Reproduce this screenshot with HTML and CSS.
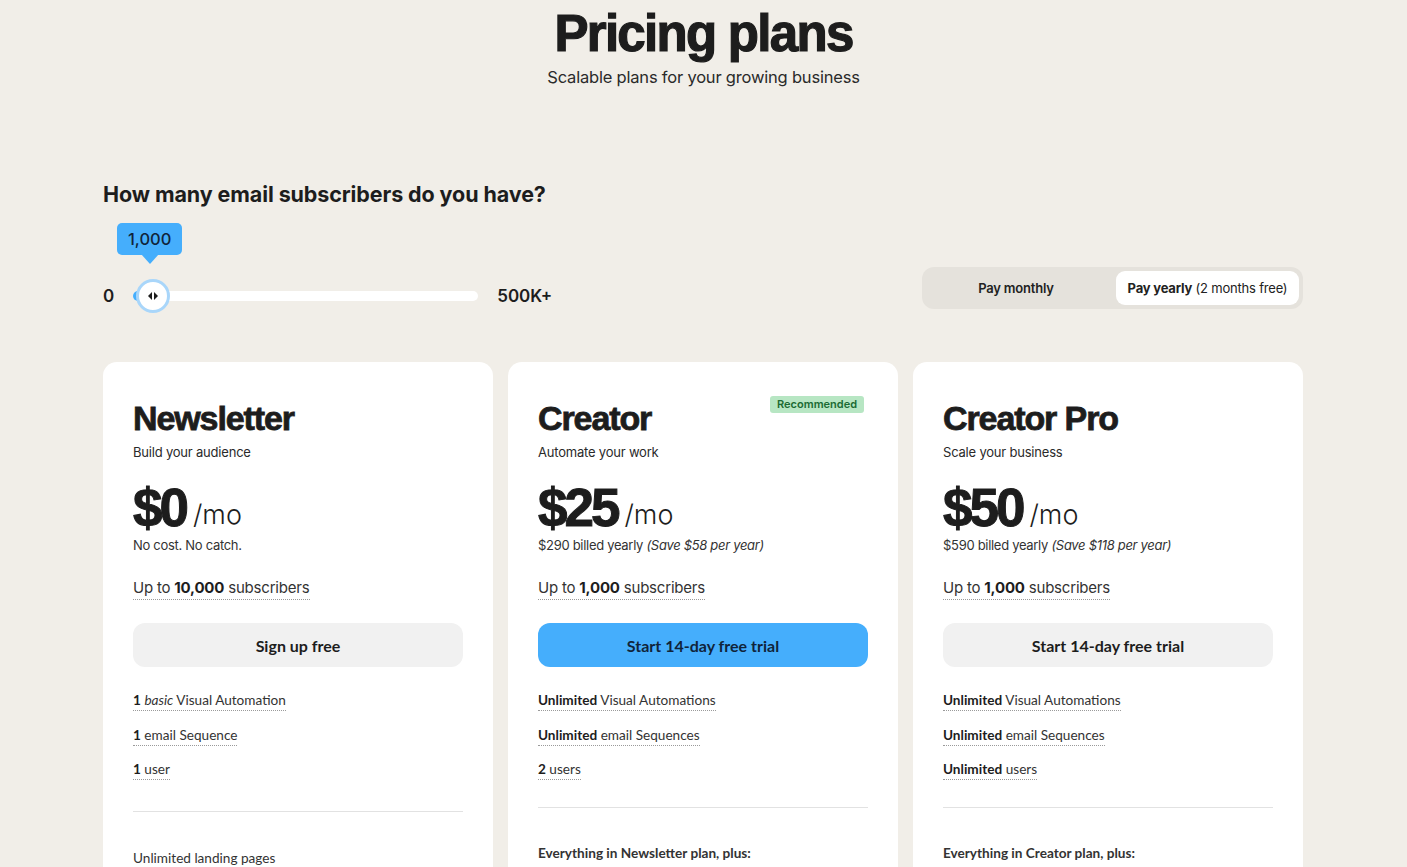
FILE: index.html
```html
<!DOCTYPE html>
<html lang="en">
<head>
  <meta charset="UTF-8">
  <meta name="viewport" content="width=device-width, initial-scale=1.0">
  <title>Pricing plans</title>
  <link rel="stylesheet" href="styles.css">
</head>
<body>

  <header class="hero">
    <h1 class="hero-title">Pricing plans</h1>
    <p class="hero-sub">Scalable plans for your growing business</p>
  </header>

  <section class="controls">
    <div class="subs">
      <h2 class="subs-title">How many email subscribers do you have?</h2>
      <div class="bubble-row">
        <div class="bubble">1,000</div>
      </div>
      <div class="slider-row">
        <span class="slider-label">0</span>
        <div class="track">
          <div class="fill"></div>
          <div class="thumb">
            <svg width="12" height="10" viewBox="0 0 12 10"><path d="M5 1 L1 5 L5 9 Z" fill="#1d1d1d"/><path d="M7 1 L11 5 L7 9 Z" fill="#1d1d1d"/></svg>
          </div>
        </div>
        <span class="slider-label">500K+</span>
      </div>
    </div>

    <div class="toggle">
      <button class="toggle-btn">Pay monthly</button>
      <button class="toggle-btn active"><b>Pay yearly</b> (2 months free)</button>
    </div>
  </section>

  <section class="cards">
    <div class="card">
      <h3 class="card-title">Newsletter</h3>
      <p class="card-sub">Build your audience</p>
      <div class="price"><span class="amount">$0</span><span class="per">/mo</span></div>
      <p class="billed">No cost. No catch.</p>
      <p class="limit"><span class="dotted">Up to <b>10,000</b> subscribers</span></p>
      <button class="cta">Sign up free</button>
      <ul class="features">
        <li><span class="dotted"><b>1</b> <i>basic</i> Visual Automation</span></li>
        <li><span class="dotted"><b>1</b> email Sequence</span></li>
        <li><span class="dotted"><b>1</b> user</span></li>
      </ul>
      <hr class="divider first">
      <ul class="features extra">
        <li><span class="dotted">Unlimited landing pages</span></li>
      </ul>
    </div>

    <div class="card">
      <span class="badge">Recommended</span>
      <h3 class="card-title">Creator</h3>
      <p class="card-sub">Automate your work</p>
      <div class="price"><span class="amount">$25</span><span class="per">/mo</span></div>
      <p class="billed">$290 billed yearly <i>(Save $58 per year)</i></p>
      <p class="limit"><span class="dotted">Up to <b>1,000</b> subscribers</span></p>
      <button class="cta primary">Start 14-day free trial</button>
      <ul class="features">
        <li><span class="dotted"><b>Unlimited</b> Visual Automations</span></li>
        <li><span class="dotted"><b>Unlimited</b> email Sequences</span></li>
        <li><span class="dotted"><b>2</b> users</span></li>
      </ul>
      <hr class="divider">
      <p class="plus">Everything in Newsletter plan, plus:</p>
    </div>

    <div class="card">
      <h3 class="card-title">Creator Pro</h3>
      <p class="card-sub">Scale your business</p>
      <div class="price"><span class="amount">$50</span><span class="per">/mo</span></div>
      <p class="billed">$590 billed yearly <i>(Save $118 per year)</i></p>
      <p class="limit"><span class="dotted">Up to <b>1,000</b> subscribers</span></p>
      <button class="cta">Start 14-day free trial</button>
      <ul class="features">
        <li><span class="dotted"><b>Unlimited</b> Visual Automations</span></li>
        <li><span class="dotted"><b>Unlimited</b> email Sequences</span></li>
        <li><span class="dotted"><b>Unlimited</b> users</span></li>
      </ul>
      <hr class="divider">
      <p class="plus">Everything in Creator plan, plus:</p>
    </div>
  </section>

</body>
</html>
```

FILE: styles.css
```css
body {
  margin: 0;
  background: #f1eee8;
  color: #1d1d1d;
  font-family: 'Inter', 'Liberation Sans', sans-serif;
  overflow: hidden;
}

.hero {
  text-align: center;
  padding-top: 5px;
}

.hero-title {
  margin: 0;
  font-family: 'Liberation Sans', 'Arial', sans-serif;
  font-weight: 700;
  font-size: 51px;
  line-height: 58px;
  letter-spacing: -1.7px;
  -webkit-text-stroke: 1.2px #1d1d1d;
}

.hero-sub {
  margin: 4px 0 0;
  font-size: 16.5px;
  line-height: 20px;
  letter-spacing: -0.2px;
  color: #2a2a2a;
}

.controls {
  width: 1200px;
  margin: 93px 0 0 103px;
  display: flex;
  justify-content: space-between;
  align-items: flex-end;
}

.subs-title {
  margin: 0;
  font-size: 21.5px;
  font-weight: 700;
  letter-spacing: -0.1px;
  line-height: 28px;
}

.bubble-row {
  margin-top: 15px;
  padding-left: 14px;
}

.bubble {
  position: relative;
  display: inline-block;
  background: #45aefc;
  color: #10243a;
  font-size: 16.5px;
  font-weight: 500;
  padding: 5px 11px;
  border-radius: 5px;
  line-height: 22px;
}

.bubble::after {
  content: "";
  position: absolute;
  left: 50%;
  bottom: -9px;
  margin-left: -9px;
  border-left: 9px solid transparent;
  border-right: 9px solid transparent;
  border-top: 10px solid #45aefc;
}

.slider-row {
  display: flex;
  align-items: center;
  margin-top: 24px;
  height: 34px;
}

.slider-label {
  font-size: 17px;
  font-weight: 600;
}

.track {
  position: relative;
  width: 345px;
  height: 10px;
  background: #fff;
  border-radius: 5px;
  margin: 0 19px;
}

.fill {
  position: absolute;
  left: 0;
  top: 0;
  width: 20px;
  height: 10px;
  background: #45aefc;
  border-radius: 5px 0 0 5px;
}

.thumb {
  position: absolute;
  left: 3px;
  top: -12px;
  width: 28px;
  height: 28px;
  border: 3px solid #a9d6fa;
  border-radius: 50%;
  background: #fff;
  display: flex;
  align-items: center;
  justify-content: center;
}

.toggle {
  display: flex;
  width: 381px;
  height: 42px;
  box-sizing: border-box;
  background: #e5e2dc;
  border-radius: 12px;
  padding: 4px;
  margin-bottom: 4px;
}

.toggle-btn {
  flex: 1;
  border: none;
  background: transparent;
  border-radius: 9px;
  font-family: 'Inter', sans-serif;
  font-size: 13px;
  font-weight: 600;
  letter-spacing: -0.2px;
  color: #222;
  padding: 0 10px 0 0;
}

.toggle-btn.active {
  background: #fff;
  font-weight: 400;
  flex: 0 0 183px;
  padding: 0;
}

.cards {
  width: 1200px;
  margin: 49px 0 0 103px;
  display: flex;
  gap: 15px;
}

.card {
  position: relative;
  flex: 1;
  background: #fff;
  border-radius: 14px;
  padding: 36px 30px 20px;
  height: 600px;
}

.badge {
  position: absolute;
  top: 34px;
  right: 34px;
  background: #b7e6c3;
  color: #1c6b33;
  font-size: 11px;
  font-weight: 600;
  padding: 1px 7px;
  border-radius: 3px;
  line-height: 15px;
}

.card-title {
  margin: 0;
  font-family: 'Liberation Sans', 'Arial', sans-serif;
  font-weight: 700;
  font-size: 34px;
  line-height: 40px;
  letter-spacing: -1.1px;
  -webkit-text-stroke: 0.8px #1d1d1d;
}

.card-sub {
  margin: 6px 0 0;
  font-size: 13px;
  line-height: 16px;
  letter-spacing: -0.2px;
  color: #2a2a2a;
}

.price {
  margin-top: 21px;
  display: flex;
  align-items: baseline;
  height: 53px;
  line-height: 53px;
}

.amount {
  font-family: 'Liberation Sans', 'Arial', sans-serif;
  font-weight: 700;
  font-size: 53px;
  letter-spacing: -3px;
  -webkit-text-stroke: 1px #1d1d1d;
}

.per {
  font-size: 27px;
  font-weight: 300;
  margin-left: 7px;
  position: relative;
  top: -2px;
}

.billed {
  margin: 3px 0 0;
  font-size: 13px;
  line-height: 16px;
  letter-spacing: -0.3px;
  color: #333;
}

.limit {
  margin: 26px 0 0;
  font-size: 15px;
  line-height: 18px;
  letter-spacing: -0.2px;
  color: #333;
}

.limit b {
  color: #1d1d1d;
}

.dotted {
  border-bottom: 1.5px dotted #9a9a9a;
  padding-bottom: 2px;
}

.cta {
  display: block;
  width: 100%;
  height: 44px;
  margin-top: 26px;
  border: none;
  border-radius: 12px;
  background: #f1f1f1;
  font-family: 'Lato', sans-serif;
  font-weight: 700;
  font-size: 16px;
  color: #1d1d1d;
}

.cta.primary {
  background: #45aefc;
  color: #10243a;
}

.features {
  list-style: none;
  margin: 25px 0 0;
  padding: 0;
  font-family: 'Lato', sans-serif;
  font-size: 13.6px;
  line-height: 17px;
  color: #333;
}

.features li {
  height: 34.5px;
}

.features b {
  color: #1d1d1d;
}

.divider {
  border: none;
  border-top: 1px solid #e2e2e2;
  margin: 11px 0 0;
}

.divider.first {
  margin-top: 15px;
}

.features.extra {
  margin-top: 38px;
}

.plus {
  margin: 37px 0 0;
  font-family: 'Lato', sans-serif;
  font-weight: 700;
  font-size: 13.6px;
  line-height: 17px;
  color: #333;
}
```
